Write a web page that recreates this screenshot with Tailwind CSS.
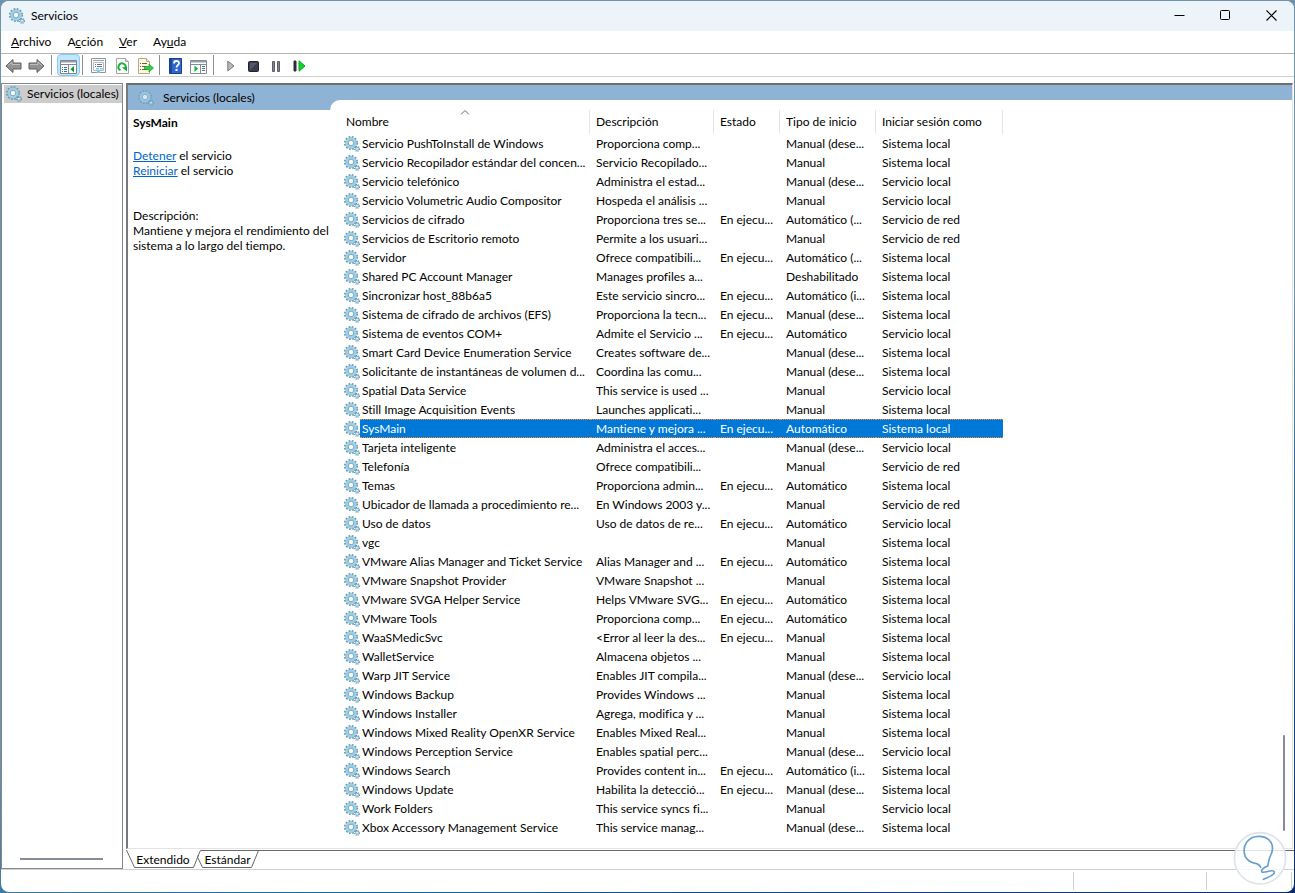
<!DOCTYPE html>
<html lang="es">

<head>
    <meta charset="UTF-8" />
    <meta name="viewport" content="width=device-width, initial-scale=1.0" />
    <title>Servicios</title>
    <script src="https://cdn.jsdelivr.net/npm/@tailwindcss/browser@4"></script>
</head>

<body
    class="h-screen overflow-hidden p-px bg-[linear-gradient(160deg,#6f93a8,#6f93a8_55%,#0f65a0_75%,#0a2a6b)] font-['Lato','Open_Sans',sans-serif] text-[12px] leading-[15px] text-black [font-variant-ligatures:none]">
    <!-- shared symbols -->
    <svg class="hidden">
        <symbol id="gears" viewBox="0 0 16 16">
            <circle cx="7" cy="7" r="6.2" fill="none" stroke="#6a9cb6" stroke-width="1.8" stroke-dasharray="1.7 1.55" />
            <circle cx="7" cy="7" r="4.2" fill="#f2fafe" stroke="#9ed0e6" stroke-width="2.4" />
            <circle cx="7" cy="7" r="5.6" fill="none" stroke="#78aec8" stroke-width=".5" />
            <circle cx="7" cy="7" r="2.8" fill="#fbfeff" stroke="#5c91ae" stroke-width=".8" />
            <circle cx="13" cy="12.8" r="2.3" fill="none" stroke="#5f8fa9" stroke-width="1.4" stroke-dasharray="1 .8" />
            <circle cx="13" cy="12.8" r="1.4" fill="#eef8fc" stroke="#86bad2" stroke-width="1" />
        </symbol>
        <symbol id="arrow" viewBox="0 0 17 16">
            <path d="M1 8 8 1.500V5h8v6H8v3.500z" fill="#929292" stroke="#5e5e5e" />
            <path d="M3 7.500 7 4v2.500h8" fill="none" stroke="#bdbdbd" />
        </symbol>
    </svg>

    <div class="flex h-full flex-col overflow-hidden rounded-lg bg-white">
        <header class="flex h-[30px] shrink-0 items-center bg-[#ecf3f9] pl-2">
            <svg class="size-4"><use href="#gears" /></svg>
            <h1 class="ml-1.5 flex-1 pb-0.5">Servicios</h1>
            <button aria-label="Minimizar" class="flex h-full w-[46px] items-center justify-center pb-px">
                <svg class="size-[11px]" viewBox="0 0 11 11"><path d="M.5 5.500h10" stroke="#000" /></svg>
            </button>
            <button aria-label="Maximizar" class="flex h-full w-[46px] items-center justify-center pb-px">
                <svg class="size-[11px]" viewBox="0 0 11 11"><rect x=".5" y=".5" width="9" height="9" rx="1" fill="none" stroke="#000" /></svg>
            </button>
            <button aria-label="Cerrar" class="flex h-full w-[46px] items-center justify-center pb-px">
                <svg class="size-[11px]" viewBox="0 0 11 11"><path d="m.5.5 10 10m0-10-10 10" stroke="#000" stroke-width="1.1" /></svg>
            </button>
        </header>

        <nav class="flex h-[23px] shrink-0 items-center border-b border-[#b5b5b5] pb-0.5 pl-0.5">
            <button class="px-2"><u>A</u>rchivo</button>
            <button class="px-2">A<u>c</u>ción</button>
            <button class="px-2"><u>V</u>er</button>
            <button class="px-2">Ay<u>u</u>da</button>
        </nav>

        <div class="flex h-[23px] shrink-0 items-stretch border-b border-[#cfcfcf] pl-0.5">
            <button aria-label="Atrás" class="flex w-[23px] items-center justify-center pt-0.5 pr-0.5">
                <svg class="h-4 w-[17px] shrink-0"><use href="#arrow" /></svg>
            </button>
            <button aria-label="Adelante" class="flex w-[23px] items-center justify-center pt-0.5 pr-0.5">
                <svg class="h-4 w-[17px] shrink-0 -scale-x-100"><use href="#arrow" /></svg>
            </button>
            <span class="mr-[5px] ml-0.5 w-px bg-[#8d8d8d] my-px"></span>
            <button aria-label="Mostrar árbol" class="flex w-[23px] items-center justify-center rounded-sm border border-[#8ccbee] bg-[#bfe6fa] pt-1">
                <svg class="h-[15px] w-[17px] shrink-0" viewBox="0 0 17 15">
                    <path d="M.5.5h16v13H.5z" fill="#fff" stroke="#7d8992" />
                    <path d="M1 1h15v1.500H1z" fill="#93a0ab" />
                    <path d="M1 4.500h15M8.500 5v9" stroke="#7d8992" />
                    <path d="M2 7.500h1m1 0h3m-5 2h1m1 0h3m-5 2h1m1 0h3" stroke="#3c6e96" />
                    <path d="M14 6v6.500L10.500 9.250z" fill="#0a9b2c" />
                </svg>
            </button>
            <span class="mr-[5px] ml-0.5 w-px bg-[#8d8d8d] my-px"></span>
            <button aria-label="Propiedades" class="flex w-[23px] items-center justify-center pt-0.5 pr-0.5">
                <svg class="h-4 w-[15px] shrink-0" viewBox="0 0 15 16">
                    <path d="M.5.5h14v14H.5z" fill="#fafafa" stroke="#8d959c" />
                    <path d="M2 2.500h11" stroke="#9aa3ab" />
                    <path d="M2.500 4.500h10v8h-10z" fill="#fff" stroke="#b4bac0" />
                    <path d="M4 6.500h1m1 0h5M4 8.500h1m1 0h5" stroke="#60758a" />
                    <path d="M5 10h3v1.500H5zm4 0h3v1.500H9zM6 12.500h3V15H6z" fill="#7cc6ef" />
                </svg>
            </button>
            <button aria-label="Actualizar" class="flex w-[23px] items-center justify-center pt-0.5">
                <svg class="h-4 w-[13px] shrink-0" viewBox="0 0 13 16">
                    <path d="M.5.500h9l3 3v12H.5z" fill="#fdfdfd" stroke="#a5a5a5" />
                    <path d="M9.500.5v3h3" fill="#e6e6e6" stroke="#a5a5a5" />
                    <path d="M4.500 12.200a3.600 3.600 0 1 1 5-2.200" fill="none" stroke="#15b33a" stroke-width="2" />
                    <path d="M6 9.500 11 9v4.500z" fill="#15a83a" />
                </svg>
            </button>
            <button aria-label="Exportar lista" class="flex w-[23px] items-center justify-center pt-0.5">
                <svg class="h-4 w-[17px] shrink-0" viewBox="0 0 17 16">
                    <path d="M1.500.5h8l3 3v12h-11z" fill="#fff8d6" stroke="#b3ab8c" />
                    <path d="M9.500.5v3h3" fill="#efe6bd" stroke="#b3ab8c" />
                    <path d="M3 5.500h1m1 0h5m-7 3h1m1 0h4m-6 3h1m1 0h5" stroke="#5c5c77" />
                    <path d="M7.500 8.500H12V6l4.500 4-4.500 4v-2.500H7.500z" fill="#33cc47" stroke="#128a2a" stroke-width=".6" />
                </svg>
            </button>
            <span class="mr-[5px] ml-0.5 w-px bg-[#8d8d8d] my-px"></span>
            <button aria-label="Ayuda" class="flex w-[23px] items-center justify-center pt-0.5 pr-0.5">
                <svg class="h-4 w-[13px] shrink-0" viewBox="0 0 13 16">
                    <path d="M.5.5h12v15H.5z" fill="#2d66cc" stroke="#1a3f8f" />
                    <path d="M1 1h2v14H1z" fill="#1b479c" />
                    <path d="M5 5.500C5 3.500 6 3 7.200 3 9 3 10 4 10 5.200 10 7 7.500 7.200 7.500 9.500" fill="none" stroke="#fff" stroke-width="1.800" />
                    <path d="M6.500 11h2v2h-2z" fill="#fff" />
                </svg>
            </button>
            <button aria-label="Panel de acciones" class="flex w-[23px] items-center justify-center pt-0.5 pr-0.5">
                <svg class="mt-0.5 h-[14px] w-[17px] shrink-0" viewBox="0 0 17 14">
                    <path d="M.5.5h16v13H.5z" fill="#fff" stroke="#828c95" />
                    <path d="M1 1h15v1.500H1z" fill="#93a0ab" />
                    <path d="M1 4.500h15M10.500 5v9" stroke="#828c95" />
                    <path d="M12 6.500h3m-3 2h3m-3 2h3" stroke="#4f6f8f" />
                    <path d="M4.500 5.500v6.500L8 8.750z" fill="#0fb32f" />
                </svg>
            </button>
            <span class="mr-[5px] ml-0.5 w-px bg-[#8d8d8d] my-px"></span>
            <button aria-label="Iniciar servicio" class="flex w-[23px] items-center justify-center pt-0.5">
                <svg class="h-3 w-2 shrink-0" viewBox="0 0 8 12"><path d="M.8 1v10L7 6z" fill="#b8b8bd" stroke="#77777d" /></svg>
            </button>
            <button aria-label="Detener servicio" class="flex w-[23px] items-center justify-center pt-0.5">
                <svg class="size-[11px] shrink-0" viewBox="0 0 11 11">
                    <rect x=".5" y=".5" width="10" height="10" rx="1" fill="#3a3c4c" stroke="#22232f" />
                    <path d="M2 9V2h7z" fill="#565869" />
                </svg>
            </button>
            <button aria-label="Pausar servicio" class="flex w-[23px] items-center justify-center pt-0.5">
                <svg class="h-[11px] w-[9px] shrink-0" viewBox="0 0 9 11"><path d="M.5.5h2v10h-2zm5 0h2v10h-2z" fill="#85858c" stroke="#5e5e66" /></svg>
            </button>
            <button aria-label="Reiniciar servicio" class="flex w-[23px] items-center justify-center pt-0.5">
                <svg class="h-3 w-[13px] shrink-0" viewBox="0 0 13 12">
                    <path d="M1 1h2v10H1z" fill="#2a2c3b" stroke="#2a2c3b" />
                    <path d="M6 .8v10.400L12 6z" fill="#12d62f" stroke="#06a51f" />
                </svg>
            </button>
        </div>

        <main class="flex min-h-0 flex-1 pt-1.5">
            <!-- console tree -->
            <aside class="relative mr-[3px] w-[122px] shrink-0 border border-[#828790]">
                <div class="mt-px ml-0.5 flex h-[18px] items-center bg-[#cccccc] pl-0.5 whitespace-nowrap">
                    <svg class="size-4 shrink-0"><use href="#gears" /></svg>
                    <span class="ml-[5px] pb-0.5">Servicios (locales)</span>
                </div>
                <div class="absolute right-[19px] bottom-2 left-[18px] h-0.5 bg-[#868b98]"></div>
            </aside>

            <section class="flex min-w-0 flex-1 flex-col">
                <div class="relative mr-px flex min-h-0 flex-1 border-t-2 border-r border-b border-l-2 border-t-[#6e6e6e] border-r-[#e3e3e3] border-b-[#e3e3e3] border-l-[#75797f] bg-[#8fb3d5]">
                    <!-- details of the selected service -->
                    <div class="flex w-[202px] shrink-0 flex-col">
                        <div class="flex h-[25px] shrink-0 items-center pl-[10px]">
                            <svg class="size-4 opacity-70"><use href="#gears" /></svg>
                            <span class="ml-[9px]">Servicios (locales)</span>
                        </div>
                        <div class="flex-1 bg-white pt-[5px] pl-[5px]">
                            <h2 class="font-bold">SysMain</h2>
                            <p class="mt-[18px]"><a href="#" class="text-[#0066cc] underline">Detener</a> el servicio</p>
                            <p><a href="#" class="text-[#0066cc] underline">Reiniciar</a> el servicio</p>
                            <p class="mt-[30px]">Descripción:</p>
                            <p>Mantiene y mejora el rendimiento del sistema a lo largo del tiempo.</p>
                        </div>
                    </div>

                    <!-- service list -->
                    <div class="mt-[15px] min-w-0 flex-1 overflow-hidden rounded-tl-[10px] bg-white pt-[10px] pl-[10px]">
                        <table class="w-[663px] table-fixed border-separate border-spacing-0 text-left">
                            <colgroup>
                                <col class="w-[20px]" />
                                <col class="w-[230px]" />
                                <col class="w-[124px]" />
                                <col class="w-[66px]" />
                                <col class="w-[96px]" />
                                <col class="w-[127px]" />
                            </colgroup>
                            <thead>
                                <tr class="h-6">
                                    <th colspan="2" class="relative border-r border-[#e5e5e5] p-0 pb-0.5 pl-1.5 font-normal">
                                        Nombre
                                        <svg class="absolute top-0 left-1/2 h-[5px] w-[9px] -translate-x-1/2" viewBox="0 0 9 5"><path d="m.5 4.500 4-4 4 4" fill="none" stroke="#666" /></svg>
                                    </th>
                                    <th class="border-r border-[#e5e5e5] p-0 pb-0.5 pl-1.5 font-normal">Descripción</th>
                                    <th class="border-r border-[#e5e5e5] p-0 pb-0.5 pl-1.5 font-normal">Estado</th>
                                    <th class="border-r border-[#e5e5e5] p-0 pb-0.5 pl-1.5 font-normal">Tipo de inicio</th>
                                    <th class="border-r border-[#e5e5e5] p-0 pb-0.5 pl-1.5 font-normal">Iniciar sesión como</th>
                                </tr>
                            </thead>
                            <tbody id="services"></tbody>
                        </table>
                    </div>
                    <div class="absolute right-[7px] bottom-[17px] h-24 w-0.5 rounded bg-[#858b98]"></div>
                </div>

                <!-- view tabs -->
                <div class="relative mt-px flex h-[19px] shrink-0 items-start">
                    <button class="relative h-[18px] w-[73px] pl-px">
                        <svg class="absolute top-0 left-0 h-[18px] w-[73px]" viewBox="0 0 73 18"><path d="M.5 0 8.500 17.500h59L72.500 5" fill="none" stroke="#696969" /></svg>
                        Extendido
                    </button>
                    <button class="relative h-[18px] w-[61px] pr-1">
                        <svg class="absolute top-0 left-[-3px] h-[18px] w-[64px]" viewBox="0 0 64 18"><path d="M64 .5H4.500L1.500 7 6.500 17.500h49L62.500.5" fill="none" stroke="#696969" /></svg>
                        Estándar
                    </button>
                    <span class="h-px flex-1 bg-[#696969]"></span>
                </div>
            </section>
        </main>

        <footer class="flex h-[23px] shrink-0 justify-end border-t border-[#d0d0d0] py-0.5 pr-0.5">
            <div class="w-[133px] border-l border-[#d0d0d0]"></div>
            <div class="w-[86px] border-x border-[#d0d0d0]"></div>
        </footer>
    </div>

    <!-- bulb watermark -->
    <svg class="absolute right-0 bottom-0 h-[63px] w-[62px]" viewBox="-6 0 186 189">
        <circle cx="75" cy="85" r="77" fill="#fff" fill-opacity=".8" stroke="#dce3e9" stroke-width="5" />
        <path d="M77 112C70 92 45 108 31 80 18 45 42 18 73 19c34 1 48 29 34 57-8 15-5 20-9 32-10 4-22 11-17 18 8 5 34-11 37 0 1 9-20 17-33 22" fill="none" stroke="#669fd2" stroke-width="5" stroke-linecap="round" />
    </svg>

    <script>
        // name, description, status, startup type, log on as
        const services = [
            ["Servicio PushToInstall de Windows", "Proporciona comp...", "", "Manual (dese...", "Sistema local"],
            ["Servicio Recopilador estándar del concen...", "Servicio Recopilado...", "", "Manual", "Sistema local"],
            ["Servicio telefónico", "Administra el estad...", "", "Manual (dese...", "Servicio local"],
            ["Servicio Volumetric Audio Compositor", "Hospeda el análisis ...", "", "Manual", "Servicio local"],
            ["Servicios de cifrado", "Proporciona tres se...", "En ejecu...", "Automático (...", "Servicio de red"],
            ["Servicios de Escritorio remoto", "Permite a los usuari...", "", "Manual", "Servicio de red"],
            ["Servidor", "Ofrece compatibili...", "En ejecu...", "Automático (...", "Sistema local"],
            ["Shared PC Account Manager", "Manages profiles a...", "", "Deshabilitado", "Sistema local"],
            ["Sincronizar host_88b6a5", "Este servicio sincro...", "En ejecu...", "Automático (i...", "Sistema local"],
            ["Sistema de cifrado de archivos (EFS)", "Proporciona la tecn...", "En ejecu...", "Manual (dese...", "Sistema local"],
            ["Sistema de eventos COM+", "Admite el Servicio ...", "En ejecu...", "Automático", "Servicio local"],
            ["Smart Card Device Enumeration Service", "Creates software de...", "", "Manual (dese...", "Sistema local"],
            ["Solicitante de instantáneas de volumen d...", "Coordina las comu...", "", "Manual (dese...", "Sistema local"],
            ["Spatial Data Service", "This service is used ...", "", "Manual", "Servicio local"],
            ["Still Image Acquisition Events", "Launches applicati...", "", "Manual", "Sistema local"],
            ["SysMain", "Mantiene y mejora ...", "En ejecu...", "Automático", "Sistema local"],
            ["Tarjeta inteligente", "Administra el acces...", "", "Manual (dese...", "Servicio local"],
            ["Telefonía", "Ofrece compatibili...", "", "Manual", "Servicio de red"],
            ["Temas", "Proporciona admin...", "En ejecu...", "Automático", "Sistema local"],
            ["Ubicador de llamada a procedimiento re...", "En Windows 2003 y...", "", "Manual", "Servicio de red"],
            ["Uso de datos", "Uso de datos de re...", "En ejecu...", "Automático", "Servicio local"],
            ["vgc", "", "", "Manual", "Sistema local"],
            ["VMware Alias Manager and Ticket Service", "Alias Manager and ...", "En ejecu...", "Automático", "Sistema local"],
            ["VMware Snapshot Provider", "VMware Snapshot ...", "", "Manual", "Sistema local"],
            ["VMware SVGA Helper Service", "Helps VMware SVG...", "En ejecu...", "Automático", "Sistema local"],
            ["VMware Tools", "Proporciona comp...", "En ejecu...", "Automático", "Sistema local"],
            ["WaaSMedicSvc", "<Error al leer la des...", "En ejecu...", "Manual", "Sistema local"],
            ["WalletService", "Almacena objetos ...", "", "Manual", "Sistema local"],
            ["Warp JIT Service", "Enables JIT compila...", "", "Manual (dese...", "Servicio local"],
            ["Windows Backup", "Provides Windows ...", "", "Manual", "Sistema local"],
            ["Windows Installer", "Agrega, modifica y ...", "", "Manual", "Sistema local"],
            ["Windows Mixed Reality OpenXR Service", "Enables Mixed Real...", "", "Manual", "Sistema local"],
            ["Windows Perception Service", "Enables spatial perc...", "", "Manual (dese...", "Servicio local"],
            ["Windows Search", "Provides content in...", "En ejecu...", "Automático (i...", "Sistema local"],
            ["Windows Update", "Habilita la detecció...", "En ejecu...", "Manual (dese...", "Sistema local"],
            ["Work Folders", "This service syncs fi...", "", "Manual", "Servicio local"],
            ["Xbox Accessory Management Service", "This service manag...", "", "Manual (dese...", "Sistema local"]
        ];
        const selected = "SysMain";

        const tbody = document.getElementById("services");
        services.forEach((service) => {
            const row = document.createElement("tr");
            row.className = "h-[19px]";
            row.innerHTML = '<td class="p-0 pl-1"><svg class="block size-4"><use href="#gears" /></svg></td>';
            service.forEach((text, i) => {
                const cell = document.createElement("td");
                cell.className = i === 0 ? "p-0 pl-0.5 whitespace-nowrap" : "p-0 pl-1.5 whitespace-nowrap";
                if (service[0] === selected) {
                    cell.className += " border-y border-dotted border-[#ff8728] bg-[#0078d7] text-white";
                }
                cell.textContent = text;
                row.appendChild(cell);
            });
            tbody.appendChild(row);
        });
    </script>
</body>

</html>
